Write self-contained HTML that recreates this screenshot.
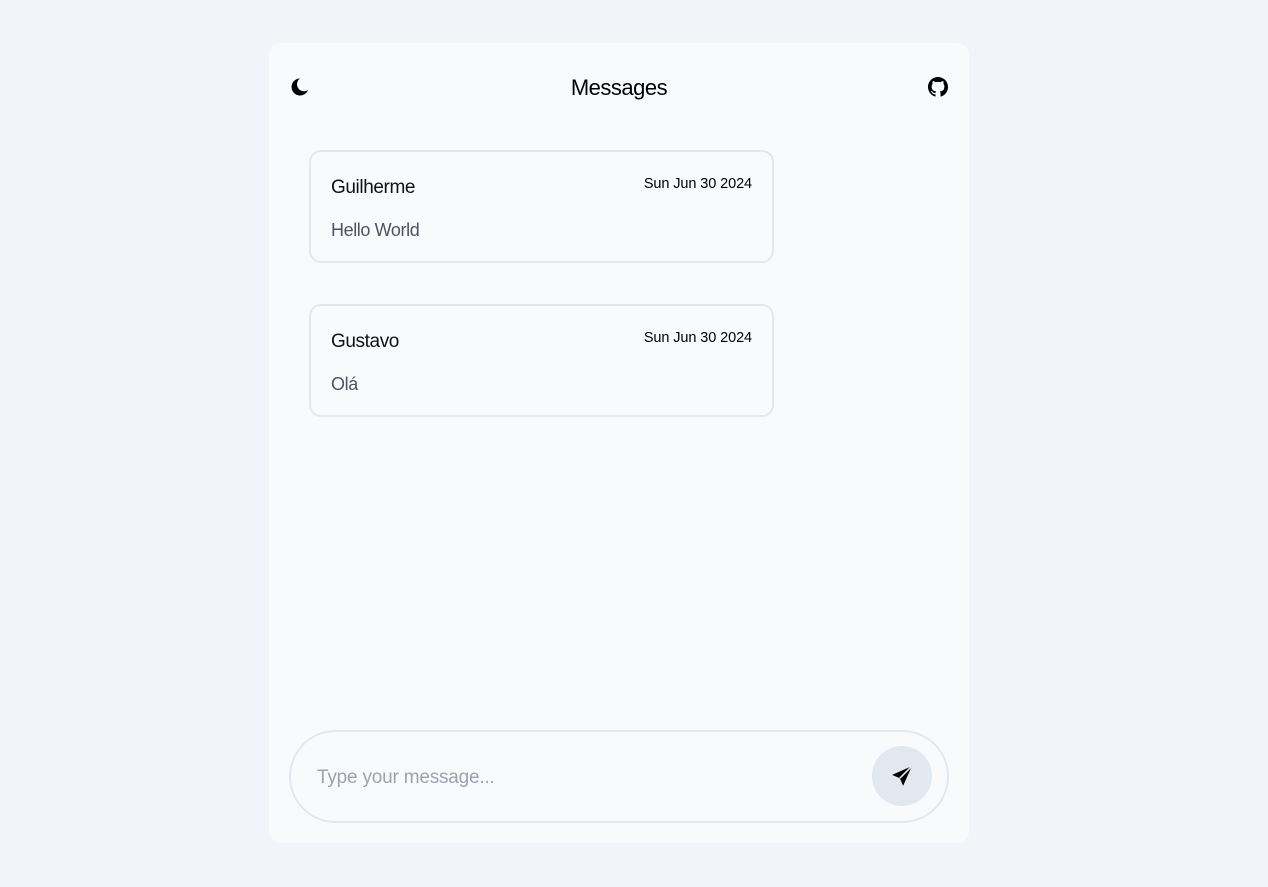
<!DOCTYPE html>
<html><head><meta charset="utf-8"><style>
*{box-sizing:border-box;margin:0;padding:0}
body{width:1268px;height:887px;background:#f1f5f9;font-family:"Liberation Sans",sans-serif;position:relative;overflow:hidden}
.card{position:absolute;left:269px;top:43px;width:700px;height:800px;background:#f8fafc;border-radius:12px}
.title{position:absolute;left:0;right:0;top:32px;text-align:center;font-size:22px;color:#000;letter-spacing:-0.5px}
.moon{position:absolute;left:20px;top:34px}
.gh{position:absolute;left:659px;top:34px}
.msg{position:absolute;left:40px;width:465px;height:113px;border:2px solid #e2e8f0;border-radius:12px}
.name{position:absolute;left:20px;top:25px;font-size:19px;color:#111;letter-spacing:-0.4px}
.date{position:absolute;right:20px;top:24px;font-size:14.5px;color:#000;letter-spacing:-0.1px}
.body{position:absolute;left:20px;top:68px;font-size:18px;color:#4b5563;letter-spacing:-0.4px}
.input{position:absolute;left:20px;top:687px;width:660px;height:93px;border:2px solid #e2e8f0;border-radius:47px}
.ph{position:absolute;left:26px;top:35px;font-size:19px;color:#9ca3af;letter-spacing:-0.2px}
.send{position:absolute;left:581px;top:14px;width:60px;height:60px;border-radius:50%;background:#e2e8f0}
</style></head><body>
<div class="card">
<svg class="moon" width="20" height="20" viewBox="0 0 20 20"><path d="M11 1.5A8.5 8.5 0 1 0 19 13 A7 7 0 0 1 11 1.5Z" fill="#000"/></svg>
<div class="title">Messages</div>
<svg class="gh" width="20" height="20" viewBox="0 0 16 16"><path fill="#000" d="M8 0C3.58 0 0 3.58 0 8c0 3.540 2.29 6.53 5.47 7.590.4.07.55-.17.55-.38 0-.19-.01-.82-.01-1.49-2.01.37-2.530-.49-2.69-.94-.09-.23-.48-.94-.82-1.13-.28-.15-.68-.52-.01-.53.63-.01 1.08.58 1.23.82.72 1.21 1.87.87 2.33.66.07-.52.28-.87.51-1.07-1.78-.2-3.64-.89-3.64-3.95 0-.87.31-1.59.82-2.150-.08-.2-.36-1.02.08-2.12 0 0 .67-.21 2.2.82.64-.18 1.32-.27 2-.27.68 0 1.36.09 2 .27 1.53-1.04 2.2-.82 2.2-.82.44 1.1.16 1.92.08 2.12.51.56.82 1.27.82 2.15 0 3.07-1.87 3.75-3.65 3.95.29.25.54.73.54 1.48 0 1.07-.01 1.93-.01 2.2 0 .21.15.46.55.38A8.013 8.013 0 0016 8c0-4.42-3.58-8-8-8z"/></svg>
<div class="msg" style="top:107px"><div class="name">Guilherme</div><div class="date">Sun Jun 30 2024</div><div class="body">Hello World</div></div>
<div class="msg" style="top:261px"><div class="name">Gustavo</div><div class="date">Sun Jun 30 2024</div><div class="body">Olá</div></div>
<div class="input"><div class="ph">Type your message...</div>
<div class="send"><svg style="position:absolute;left:19px;top:19px" width="22" height="22" viewBox="0 0 20 20"><path d="M19 1 L1 9 L8 12 L11 19 Z" fill="#000"/><path d="M19 1 L8 12" stroke="#e2e8f0" stroke-width="1.5"/></svg></div>
</div>
</div>
</body></html>
